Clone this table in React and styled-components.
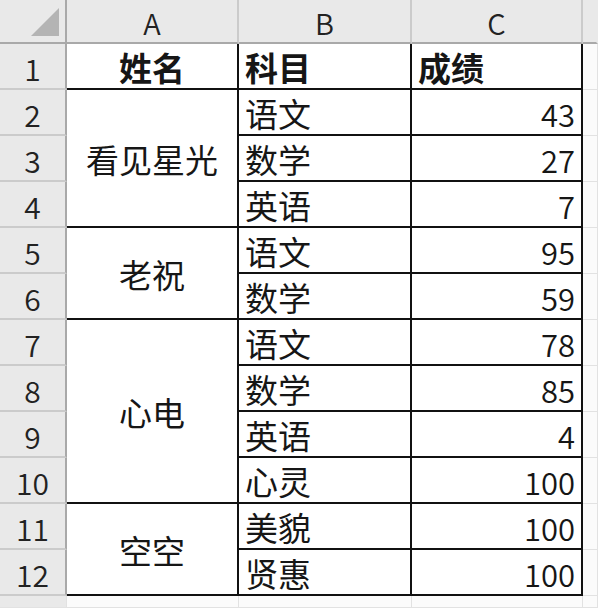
import React from "react";
import styled, { createGlobalStyle } from "styled-components";

const GlobalStyle = createGlobalStyle`
  html, body {
    margin: 0;
    padding: 0;
    background: #fff;
  }
  body {
    font-family: "Noto Sans CJK SC", "Noto Sans", sans-serif;
    color: #1a1a1a;
  }
`;

const Sheet = styled.div`
  display: grid;
  grid-template-columns: 67px 172px 173px 171px 15px;
  grid-template-rows: 44px repeat(12, 46px) 12px;
  width: 598px;
  height: 608px;
  overflow: hidden;
`;

const Corner = styled.div`
  background: #e9e9e9;
  border-right: 2px solid #a9a9a9;
  border-bottom: 2px solid #a9a9a9;
  box-sizing: border-box;
  display: flex;
  align-items: flex-end;
  justify-content: flex-end;
  padding: 0 6px 6px 0;
`;

const ColHead = styled.div`
  background: #e9e9e9;
  border-right: 2px solid ${(p) => (p.$last ? "#e9e9e9" : "#cbcbcb")};
  border-bottom: 2px solid #a9a9a9;
  box-sizing: border-box;
  display: flex;
  align-items: center;
  justify-content: center;
  font-size: 29px;
  font-weight: 350;
  line-height: 1;
  padding-top: 2px;
  color: #222;
`;

const RowHead = styled.div`
  grid-column: 1;
  grid-row: ${(p) => p.$row};
  background: #e9e9e9;
  border-right: 2px solid #a9a9a9;
  border-bottom: 2px solid #cbcbcb;
  box-sizing: border-box;
  display: flex;
  align-items: center;
  justify-content: center;
  font-size: 30px;
  font-weight: 350;
  line-height: 1;
  padding-top: 3px;
  color: #222;
`;

const Cell = styled.div`
  grid-column: ${(p) => p.$col};
  grid-row: ${(p) => p.$row} / span ${(p) => p.$span || 1};
  border-right: 2px solid #111;
  border-bottom: 2px solid #111;
  box-sizing: border-box;
  display: flex;
  align-items: center;
  justify-content: ${(p) =>
    p.$align === "right" ? "flex-end" : p.$align === "center" ? "center" : "flex-start"};
  padding: 3px 6px 0 6px;
  font-size: ${(p) => (p.$num ? "31px" : "33px")};
  font-weight: ${(p) => (p.$bold ? 700 : p.$num ? 350 : 400)};
  line-height: 1;
  white-space: nowrap;
  color: #161616;
`;

const Blank = styled.div`
  grid-column: ${(p) => p.$col};
  grid-row: ${(p) => p.$row};
  border-right: 1px solid #e2e2e2;
  border-bottom: 1px solid #e2e2e2;
  box-sizing: border-box;
  background: ${(p) => (p.$gray ? "#e9e9e9" : "#fbfbfb")};
`;

const groups = [
  { name: "看见星光", rows: [["语文", 43], ["数学", 27], ["英语", 7]] },
  { name: "老祝", rows: [["语文", 95], ["数学", 59]] },
  { name: "心电", rows: [["语文", 78], ["数学", 85], ["英语", 4], ["心灵", 100]] },
  { name: "空空", rows: [["美貌", 100], ["贤惠", 100]] },
];

function CornerMark() {
  return (
    <svg width="28" height="28" viewBox="0 0 28 28">
      <polygon points="28,0 28,28 0,28" fill="#b4b4b4" />
    </svg>
  );
}

export default function App() {
  const cells = [];
  let row = 3;
  groups.forEach((g) => {
    cells.push(
      <Cell key={g.name} $col={2} $row={row} $span={g.rows.length} $align="center">
        {g.name}
      </Cell>
    );
    g.rows.forEach(([subj, score], i) => {
      const r = row + i;
      cells.push(
        <Cell key={`s${r}`} $col={3} $row={r} $align="left">
          {subj}
        </Cell>
      );
      cells.push(
        <Cell key={`n${r}`} $col={4} $row={r} $align="right" $num>
          {score}
        </Cell>
      );
    });
    row += g.rows.length;
  });

  return (
    <>
      <GlobalStyle />
      <Sheet>
        <Corner>
          <CornerMark />
        </Corner>
        <ColHead>A</ColHead>
        <ColHead>B</ColHead>
        <ColHead>C</ColHead>
        <ColHead $last />
        {Array.from({ length: 12 }, (_, i) => (
          <RowHead key={`r${i}`} $row={i + 2}>
            {i + 1}
          </RowHead>
        ))}
        <Cell $col={2} $row={2} $align="center" $bold>
          姓名
        </Cell>
        <Cell $col={3} $row={2} $align="left" $bold>
          科目
        </Cell>
        <Cell $col={4} $row={2} $align="left" $bold>
          成绩
        </Cell>
        {cells}
        {Array.from({ length: 12 }, (_, i) => (
          <Blank key={`d${i}`} $col={5} $row={i + 2} />
        ))}
        <Blank $gray $col={1} $row={14} />
        {[2, 3, 4, 5].map((c) => (
          <Blank key={`b${c}`} $col={c} $row={14} />
        ))}
      </Sheet>
    </>
  );
}
